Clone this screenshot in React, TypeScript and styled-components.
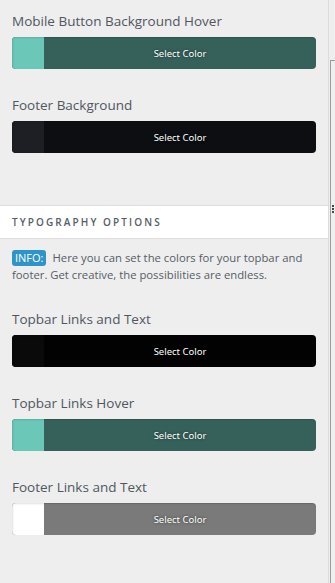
import React, { FC } from 'react'
import styled, { createGlobalStyle } from 'styled-components'

const GlobalStyle = createGlobalStyle`
  html, body {
    margin: 0;
    padding: 0;
    background: #eeeeee;
  }
  body {
    font-family: 'Open Sans', 'Noto Sans', sans-serif;
  }
`

type ColorControlProps = {
  label: string
  swatch: string
  color: string
}

const ColorControl: FC<ColorControlProps> = ({ label, swatch, color }) => (
  <Control>
    <Label>{label}</Label>
    <Picker bg={color}>
      <Swatch bg={swatch} />
      <PickerText>Select Color</PickerText>
    </Picker>
  </Control>
)

const App: FC = () => {
  return (
    <>
      <GlobalStyle />
      <Page>
        <Panel>
          <ColorControl label="Mobile Button Background Hover" swatch="#6bc7b7" color="#36615a" />
          <ColorControl label="Footer Background" swatch="#1d1f24" color="#0c0e11" />
          <SectionTitle>Typography Options</SectionTitle>
          <Info>
            <Badge>INFO:</Badge>Here you can set the colors for your topbar and footer. Get
            creative, the possibilities are endless.
          </Info>
          <ColorControl label="Topbar Links and Text" swatch="#0a0a0a" color="#020202" />
          <ColorControl label="Topbar Links Hover" swatch="#6bc7b7" color="#36615a" />
          <ColorControl label="Footer Links and Text" swatch="#ffffff" color="#7a7a7a" />
        </Panel>
        <Side>
          <Grip>
            <i />
            <i />
            <i />
          </Grip>
          <Track />
        </Side>
      </Page>
    </>
  )
}

export default App

const Page = styled.div`
  display: flex;
  width: 335px;
  height: 583px;
  overflow: hidden;
`

const Panel = styled.div`
  width: 328px;
  flex-shrink: 0;
  border-right: 1px solid #dcdcdc;
  padding-top: 10px;
`

const Control = styled.div`
  padding: 0 12px;
  margin-bottom: 25px;
`

const Label = styled.div`
  font-size: 13.5px;
  line-height: 22px;
  color: #50575e;
  margin-bottom: 5px;
  white-space: nowrap;
`

const Picker = styled.div<{ bg: string }>`
  display: flex;
  height: 32px;
  width: 304px;
  border-radius: 4px;
  overflow: hidden;
  background: ${(p) => p.bg};
  box-shadow: inset 0 1px 1px rgba(0, 0, 0, 0.15);
`

const Swatch = styled.div<{ bg: string }>`
  width: 32px;
  background: ${(p) => p.bg};
  box-shadow: inset 1px 1px 2px rgba(0, 0, 0, 0.12);
`

const PickerText = styled.div`
  flex: 1;
  display: flex;
  align-items: center;
  justify-content: center;
  font-family: 'Noto Sans', sans-serif;
  font-size: 9.5px;
  color: #fff;
  text-shadow: 0 0 3px rgba(0, 0, 0, 0.6);
`

const SectionTitle = styled.div`
  margin-top: 52px;
  height: 32px;
  display: flex;
  align-items: center;
  padding: 0 12px;
  background: #fff;
  border-top: 1px solid #dddddd;
  border-bottom: 1px solid #dddddd;
  text-transform: uppercase;
  letter-spacing: 2.1px;
  font-size: 10px;
  font-weight: 600;
  color: #555d66;
`

const Info = styled.div`
  padding: 10px 12px 0;
  margin-bottom: 25px;
  font-size: 11.3px;
  line-height: 17px;
  color: #555d66;
`

const Badge = styled.span`
  display: inline-block;
  background: #2e95c8;
  color: #fff;
  border-radius: 3px;
  padding: 0 3px;
  line-height: 16px;
  font-size: 11px;
  margin-right: 6px;
`

const Side = styled.div`
  position: relative;
  flex: 1;
  background: #eeeeee;
`

const Track = styled.div`
  position: absolute;
  left: 1px;
  right: -4px;
  top: 60px;
  bottom: 0;
  border-left: 1px solid #9c9c9c;
  border-top: 1px solid #9c9c9c;
  background: #efefef;
`

const Grip = styled.div`
  position: absolute;
  left: 3px;
  top: 205px;
  display: flex;
  flex-direction: column;
  gap: 1px;
  z-index: 1;

  & i {
    display: block;
    width: 2px;
    height: 2px;
    background: #444;
  }
`
